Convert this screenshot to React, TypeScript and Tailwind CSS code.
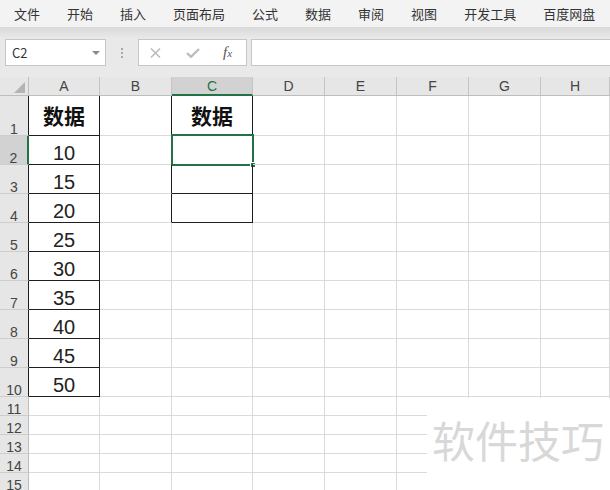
import React from 'react'

const MENU = ['文件', '开始', '插入', '页面布局', '公式', '数据', '审阅', '视图', '开发工具', '百度网盘']
const COLS = ['A', 'B', 'C', 'D', 'E', 'F', 'G', 'H']
const ROWS = Array.from({ length: 15 }, (_, i) => i + 1)

// A 列数据：第 1 行表头，2~10 行为数值
const A_VALUES: Record<number, string> = {
  1: '数据', 2: '10', 3: '15', 4: '20', 5: '25', 6: '30', 7: '35', 8: '40', 9: '45', 10: '50',
}

const GREEN = '#217346'

function FormulaBar() {
  return (
    <div className="flex h-[29px] items-center bg-[#e9e9e9] pl-[5px]">
      <div className="flex h-[27px] w-[101px] shrink-0 items-center justify-between border border-[#c6c6c6] bg-white pl-[6px] pr-[5px] text-[13px] text-[#333]">
        <span className="leading-none">C2</span>
        <svg width="8" height="4" viewBox="0 0 8 4">
          <path d="M0 0h8L4 4z" fill="#8a8a8a" />
        </svg>
      </div>
      <div className="ml-[15px] flex shrink-0 flex-col gap-[2px]">
        <span className="size-[2px] bg-[#a8a8a8]" />
        <span className="size-[2px] bg-[#a8a8a8]" />
        <span className="size-[2px] bg-[#a8a8a8]" />
      </div>
      <div className="ml-[15px] flex h-[27px] w-[109px] shrink-0 items-center border border-[#c6c6c6] bg-white pl-[11px]">
        <svg width="11" height="10" viewBox="0 0 11 10">
          <path d="M1 0.5l9 9M10 0.5l-9 9" stroke="#b8b8b8" strokeWidth="1.4" fill="none" />
        </svg>
        <svg className="ml-[25px]" width="14" height="10" viewBox="0 0 14 10">
          <path d="M1 5l4 3.8L13 1" stroke="#bdbdbd" strokeWidth="2.4" fill="none" />
        </svg>
        <span className="ml-[23px] font-['Liberation_Serif',serif] text-[15px] italic leading-none text-[#555]">
          f<span className="text-[11px]">x</span>
        </span>
      </div>
      <div className="ml-[4px] h-[27px] flex-1 border border-r-0 border-[#c6c6c6] bg-white" />
    </div>
  )
}

/** 普通单元格：右、下边框，数据区加黑框，C2 为选中格。 */
function Cell({ row, col }: { row: number; col: string }) {
  const inA = col === 'A' && row <= 10
  const inC = col === 'C' && row <= 4
  const leftOfC = col === 'B' && row <= 4
  const rightBlack = inA || inC || leftOfC
  const bottomBlack = inA || inC
  const text = col === 'A' ? A_VALUES[row] : col === 'C' && row === 1 ? '数据' : undefined
  const isHead = row === 1 && !!text
  const selected = col === 'C' && row === 2

  return (
    <div
      className={[
        'relative flex justify-center border-r border-b',
        rightBlack ? 'border-r-[#1e1e1e]' : 'border-r-[#dadada]',
        bottomBlack ? 'border-b-[#1e1e1e]' : 'border-b-[#dadada]',
        isHead ? 'items-center' : 'items-end',
      ].join(' ')}
    >
      {text && isHead && (
        <span className="font-['Noto_Sans_CJK_SC',sans-serif] text-[21px] font-bold leading-none text-[#111]">{text}</span>
      )}
      {text && !isHead && (
        <span className="font-['Liberation_Sans',sans-serif] text-[20px] leading-[22px] text-[#222]">{text}</span>
      )}
      {selected && (
        <>
          <div className="absolute -top-[2px] -left-[1px] -right-[2px] -bottom-[2px] border-2 border-[#217346]" />
          <div className="absolute -right-[4px] -bottom-[4px] size-[6px] border border-white bg-[#217346]" />
        </>
      )}
    </div>
  )
}

function Sheet() {
  return (
    <div className="grid grid-cols-[29px_71px_72px_81px_72px_72px_72px_72px_1fr] grid-rows-[19px_40px_repeat(9,29px)_repeat(5,19px)] font-['Liberation_Sans',sans-serif]">
      {/* 左上角 */}
      <div className="flex items-end justify-end border-r border-b border-r-[#bdbdbd] border-b-[#bdbdbd] bg-[#e6e6e6] pr-[3px] pb-[2px]">
        <svg width="11" height="11" viewBox="0 0 11 11">
          <path d="M11 0V11H0z" fill="#b4b4b4" />
        </svg>
      </div>
      {COLS.map((c) => (
        <div
          key={c}
          className={[
            'flex items-center justify-center border-r border-r-[#c4c4c4] text-[14px] leading-none',
            c === 'C' ? 'border-b-2 border-b-[#217346] bg-[#d2d2d2] text-[#217346]' : 'border-b border-b-[#bdbdbd] bg-[#e6e6e6] text-[#444]',
            c === 'A' ? 'border-b-[#1e1e1e]' : '',
          ].join(' ')}
        >
          {c}
        </div>
      ))}
      {ROWS.map((r) => (
        <React.Fragment key={r}>
          <div
            className={[
              'flex items-end justify-center border-b border-b-[#cdcdcd] text-[14px] leading-[12px] text-[#444]',
              r === 2 ? 'border-r-2 border-r-[#217346] bg-[#d2d2d2]' : 'border-r bg-[#e6e6e6]',
              r !== 2 && r <= 10 ? 'border-r-[#1e1e1e]' : '',
              r > 10 ? 'border-r-[#bdbdbd]' : '',
            ].join(' ')}
          >
            {r}
          </div>
          {COLS.map((c) => (
            <Cell key={c} row={r} col={c} />
          ))}
        </React.Fragment>
      ))}
    </div>
  )
}

export default function App() {
  return (
    <div className="relative h-[490px] w-[610px] overflow-hidden bg-white font-['Noto_Sans_CJK_SC',sans-serif]">
      <div className="flex h-[27px] items-center gap-[27px] bg-[#f3f3f3] pl-[14px] text-[13px] text-[#333]">
        {MENU.map((m) => (
          <span key={m} className="leading-none">{m}</span>
        ))}
      </div>
      <div className="h-[11px] bg-linear-to-b from-[#d9d9d9] to-[#e9e9e9]" />
      <FormulaBar />
      <div className="h-[10px] bg-[#e9e9e9]" />
      <Sheet />

      {/* 右下角水印 */}
      <div className="absolute left-[427px] top-[398px] h-[92px] w-[183px] bg-white pl-[5px] pt-[20px]">
        <span className="block whitespace-nowrap font-['Noto_Sans_CJK_SC',sans-serif] text-[43px] leading-none text-[#d8d8d8]">
          软件技巧
        </span>
      </div>
    </div>
  )
}
